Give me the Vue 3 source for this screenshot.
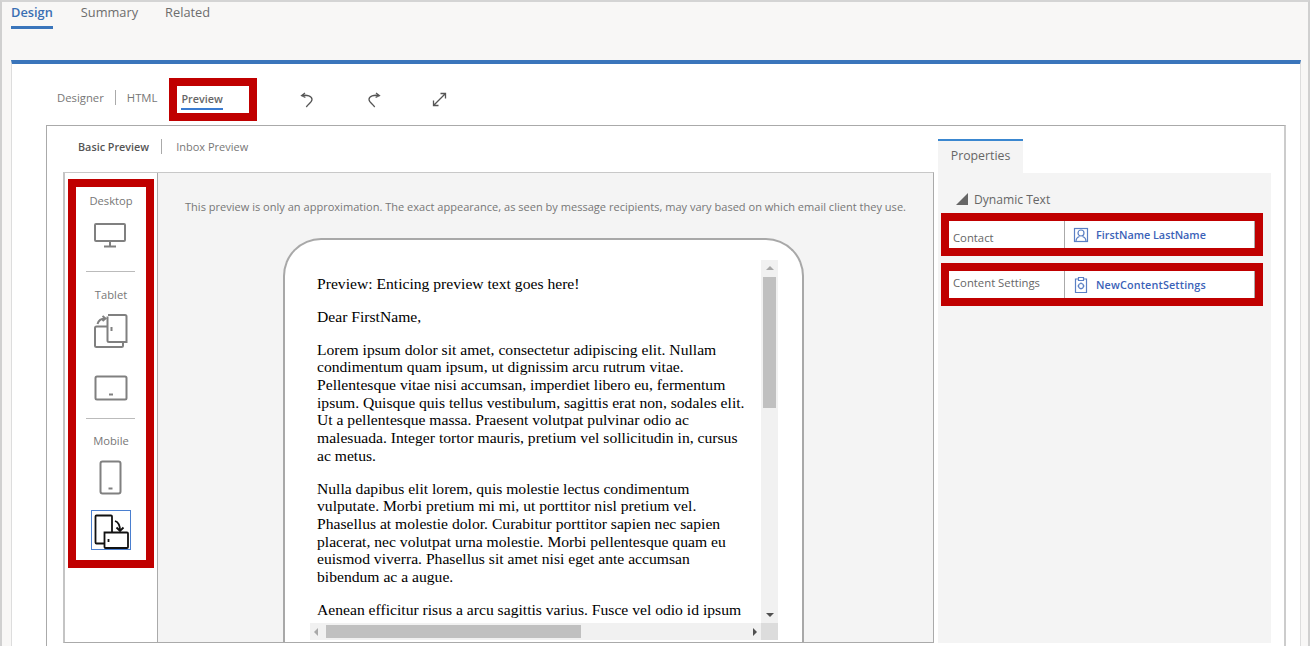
<script setup>
const tabs = ['Design', 'Summary', 'Related']

const paragraphs = [
  'Preview: Enticing preview text goes here!',
  'Dear FirstName,',
  'Lorem ipsum dolor sit amet, consectetur adipiscing elit. Nullam condimentum quam ipsum, ut dignissim arcu rutrum vitae. Pellentesque vitae nisi accumsan, imperdiet libero eu, fermentum ipsum. Quisque quis tellus vestibulum, sagittis erat non, sodales elit. Ut a pellentesque massa. Praesent volutpat pulvinar odio ac malesuada. Integer tortor mauris, pretium vel sollicitudin in, cursus ac metus.',
  'Nulla dapibus elit lorem, quis molestie lectus condimentum vulputate. Morbi pretium mi mi, ut porttitor nisl pretium vel. Phasellus at molestie dolor. Curabitur porttitor sapien nec sapien placerat, nec volutpat urna molestie. Morbi pellentesque quam eu euismod viverra. Phasellus sit amet nisi eget ante accumsan bibendum ac a augue.',
  'Aenean efficitur risus a arcu sagittis varius. Fusce vel odio id ipsum dignissim lobortis nunc at bibendum. Fusce tincidunt lorem ac nibh.'
]
</script>

<template>
  <div class="page">
    <nav class="top-tabs">
      <a v-for="(tab, i) in tabs" :key="tab" class="top-tab" :class="{ active: i === 0 }">{{ tab }}</a>
    </nav>

    <main class="panel">
      <div class="toolbar">
        <span class="mode">Designer</span>
        <span class="mode sep">HTML</span>
        <div class="mode-mark"><span class="mode current">Preview</span></div>
        <svg class="tool undo" width="14" height="16" viewBox="0 0 14 16">
          <path d="M5 1 1.6 3.6 5.4 5.4M1.8 3.6C7 2.6 12 4 12 7.400 12 10 8.500 12 6.300 15" />
        </svg>
        <svg class="tool redo" width="14" height="16" viewBox="0 0 14 16">
          <path d="M9 1 12.400 3.600 8.600 5.400M12.200 3.600C7 2.600 2 4 2 7.400 2 10 5.500 12 7.700 15" />
        </svg>
        <svg class="tool expand" width="15" height="15" viewBox="0 0 15 15">
          <path d="M1.500 13.500 13.500 1.500M8.500 1.500H13.500V6.500M1.500 8.500V13.500H6.500" />
        </svg>
      </div>

      <section class="editor">
        <div class="preview-side">
          <div class="sub-tabs">
            <span class="sub-tab strong">Basic Preview</span>
            <span class="sub-tab">Inbox Preview</span>
          </div>

          <div class="work">
            <aside class="devices">
              <div class="device-mark">
                <span class="device-label first">Desktop</span>
                <svg class="device gap-desktop" width="34" height="26" viewBox="0 0 34 26">
                  <rect x="2" y="2" width="30" height="17" rx="1" />
                  <path d="M17 19V24M11 24.500H23" />
                </svg>
                <hr class="rule rule-a">
                <span class="device-label">Tablet</span>
                <svg class="device gap-tablet" width="36" height="36" viewBox="0 0 36 36">
                  <path d="M15 2H32A1.500 1.500 0 0 1 33.500 3.500V29H16A1.500 1.500 0 0 1 14.500 27.500V3.500M30 29V32.500A1.500 1.500 0 0 1 28.500 34H3.500A1.500 1.500 0 0 1 2 32.500V15A1.500 1.500 0 0 1 3.500 13.500H14" />
                  <path d="M4.500 11C5.500 7.500 8 5.500 12 5.500M9.500 3 12.500 5.500 9.500 8M18.500 14V18" />
                </svg>
                <svg class="device gap-land" width="34" height="26" viewBox="0 0 34 26">
                  <rect x="1.500" y="1.500" width="31" height="23" rx="1.500" />
                  <path class="thick" d="M15 19.500H19" />
                </svg>
                <hr class="rule rule-b">
                <span class="device-label mobile">Mobile</span>
                <svg class="device gap-phone" width="23" height="35" viewBox="0 0 23 35">
                  <rect x="1.500" y="1.500" width="20" height="32" rx="2" />
                  <path class="thick" d="M9.500 28.500H13.500" />
                </svg>
                <button class="device-current">
                  <svg class="device dark" width="36" height="36" viewBox="0 0 36 36">
                    <path d="M11.500 30.500H3.500A1 1 0 0 1 2.500 29.500V3.500A1 1 0 0 1 3.500 2.500H18A1 1 0 0 1 19 3.500V19" />
                    <path d="M11.500 19.500H34A1 1 0 0 1 35 20.500V34A1 1 0 0 1 34 35H12.500A1 1 0 0 1 11.500 34Z" />
                    <path d="M22 8C25 9 27 12 27 17.500M30.500 14.500 27 18 23.500 14.500M15.500 26V29" />
                  </svg>
                </button>
              </div>
            </aside>

            <div class="stage">
              <p class="notice">This preview is only an approximation. The exact appearance, as seen by message recipients, may vary based on which email client they use.</p>
              <div class="phone">
                <div class="mail">
                  <div class="mail-body">
                    <p v-for="(text, i) in paragraphs" :key="i">{{ text }}</p>
                  </div>
                  <div class="vbar">
                    <i class="arrow up"></i>
                    <b class="vthumb"></b>
                    <i class="arrow down"></i>
                  </div>
                  <div class="hbar">
                    <i class="arrow left"></i>
                    <b class="hthumb"></b>
                    <i class="arrow right"></i>
                  </div>
                  <div class="corner"></div>
                </div>
              </div>
            </div>
          </div>
        </div>

        <aside class="properties">
          <div class="prop-tab">Properties</div>
          <div class="prop-body">
            <div class="prop-heading"><i class="tri"></i>Dynamic Text</div>
            <div class="prop-mark">
              <div class="prop-row">
                <span class="prop-name contact">Contact</span>
                <span class="prop-value">
                  <svg width="16" height="16" viewBox="0 0 16 16">
                    <rect x="1.500" y="1.500" width="13" height="13" />
                    <circle cx="8" cy="6" r="3" />
                    <path d="M3 14.500C3 11.500 5 10 6.500 9.500M13 14.500C13 11.500 11 10 9.500 9.500" />
                  </svg>
                  FirstName LastName
                </span>
              </div>
            </div>
            <div class="prop-mark">
              <div class="prop-row">
                <span class="prop-name">Content Settings</span>
                <span class="prop-value settings">
                  <svg width="16" height="18" viewBox="0 0 16 18">
                    <path d="M5.500 3H2.500V16.500H13.500V3H10.500M5.500 1.500H10.500V4.500H5.500Z" />
                    <circle cx="8" cy="10" r="2.500" />
                    <path d="M8 6.500V7.500M8 12.500V13.500M4.500 10H5.500M10.500 10H11.500" />
                  </svg>
                  NewContentSettings
                </span>
              </div>
            </div>
          </div>
        </aside>
      </section>
    </main>
  </div>
</template>

<style scoped>
.page {
  box-sizing: border-box;
  width: 1310px;
  height: 646px;
  overflow: hidden;
  display: flex;
  flex-direction: column;
  background: #f8f7f6;
  border-top: 2px solid #d4d4d4;
  border-left: 2px solid #d0d0d0;
  border-right: 2px solid #d0d0d0;
  font-family: "Open Sans", "Noto Sans", sans-serif;
  color: #666;
}

.top-tabs {
  height: 58px;
  display: flex;
  gap: 27px;
  padding-left: 9px;
  flex: none;
  box-sizing: border-box;
}

.top-tab {
  height: 27px;
  box-sizing: border-box;
  padding-top: 1px;
  font-size: 12.800px;
  line-height: 18px;
  color: #6d6d6d;
}

.top-tab.active {
  margin-right: 1px;
  color: #3a6fb3;
  font-weight: 600;
  border-bottom: 3px solid #3a75bb;
}

.panel {
  flex: 1;
  min-height: 0;
  margin: 0 7px 0 9px;
  background: #fff;
  border-top: 4px solid #3a75bb;
  border-left: 1px solid #ddd;
  border-right: 1px solid #ddd;
}

.toolbar {
  box-sizing: border-box;
  height: 61px;
  display: flex;
  align-items: center;
  padding: 10px 0 0 45px;
}

.mode {
  margin-bottom: 4px;
  font-size: 11.300px;
  color: #777;
}

.mode.sep {
  margin-left: 11px;
  padding-left: 11px;
  border-left: 1px solid #aaa;
}

.mode-mark {
  box-sizing: border-box;
  width: 88px;
  height: 43px;
  margin-left: 12px;
  padding: 5px 0 0 4px;
  border: 8px solid #c00000;
  display: flex;
  align-items: flex-start;
}

.mode.current {
  margin-bottom: 0;
  font-weight: 600;
  color: #666;
  padding-bottom: 2px;
  border-bottom: 2px solid #3a7bd0;
  line-height: 15px;
  font-size: 10.800px;
}

.tool {
  flex: none;
  fill: none;
  stroke: #555;
  stroke-width: 1.300;
}

.undo {
  margin-left: 43px;
}

.redo {
  margin-left: 53px;
}

.expand {
  margin-left: 51px;
}

.editor {
  box-sizing: border-box;
  height: 541px;
  margin: 0 14px 0 34px;
  display: flex;
  border: 1px solid #aaa;
  border-right: 2px solid #ccc;
  border-bottom: none;
}

.preview-side {
  width: 887px;
  flex: none;
  padding-left: 16px;
  box-sizing: border-box;
}

.sub-tabs {
  box-sizing: border-box;
  height: 46px;
  display: flex;
  align-items: center;
  padding: 0 0 6px 15px;
}

.sub-tab {
  font-size: 11px;
  color: #777;
}

.sub-tab.strong {
  font-size: 10.800px;
  font-weight: 600;
  color: #555;
  padding-right: 12px;
  margin-right: 14px;
  border-right: 1px solid #aaa;
}

.work {
  box-sizing: border-box;
  width: 871px;
  height: 471px;
  display: flex;
  border: 1px solid #aaa;
  border-top-color: #c8c8c8;
  border-left: 2px solid #c4c4c4;
}

.devices {
  width: 93px;
  flex: none;
  box-sizing: border-box;
  padding: 6px 0 0 2px;
  border-right: 1px solid #aaa;
}

.device-mark {
  box-sizing: border-box;
  width: 86px;
  height: 389px;
  margin-left: 1px;
  border: 8px solid #c00000;
  display: flex;
  flex-direction: column;
  align-items: center;
  background: #fff;
}

.device-label {
  font-size: 11.200px;
  line-height: 16px;
  color: #777;
  margin-top: 15px;
}

.device-label.first {
  margin-top: 6px;
}

.device-label.mobile {
  margin-top: 14px;
}

.device {
  flex: none;
  display: block;
  fill: none;
  stroke: #808080;
  stroke-width: 2;
}

.device .thick {
  stroke-width: 2;
}

.device.dark {
  stroke: #111;
  stroke-width: 1.800;
}

.gap-desktop {
  margin: 13px 2px 0 0;
}

.gap-tablet {
  margin-top: 10px;
}

.gap-land {
  margin-top: 26px;
}

.gap-phone {
  margin: 11px 2px 0 0;
}

.rule {
  width: 49px;
  margin: 0 2px 0 0;
  border: none;
  border-top: 1px solid #bbb;
}

.rule-a {
  margin-top: 23px;
}

.rule-b {
  margin-top: 17px;
}

.device-current {
  box-sizing: border-box;
  width: 40px;
  height: 40px;
  margin-top: 15px;
  padding: 2px 0 0 1px;
  border: 1px solid #4a7fd0;
  background: #fff;
}

.stage {
  flex: 1;
  min-width: 0;
  overflow: hidden;
  background: #f4f4f4;
  padding-left: 27px;
}

.notice {
  margin: 26px 0 0;
  font-size: 11.050px;
  line-height: 15px;
  color: #777;
  white-space: nowrap;
}

.phone {
  box-sizing: border-box;
  width: 521px;
  height: 480px;
  margin: 24px 0 0 98px;
  padding: 20px 0 0 0;
  background: #fff;
  border: 2px solid #a8a8a8;
  border-radius: 38px 38px 0 0;
  border-bottom: none;
}

.mail {
  position: relative;
  width: 493px;
  height: 380px;
  overflow: hidden;
}

.mail-body {
  box-sizing: border-box;
  width: 493px;
  padding: 15px 30px 0 32px;
  margin: 0;
  font-family: "Liberation Serif", "Times New Roman", serif;
  font-size: 15.630px;
  line-height: 17.670px;
  color: #000;
}

.mail-body p {
  margin: 0 0 15.200px;
}

.vbar {
  position: absolute;
  right: 0;
  top: 0;
  width: 17px;
  height: 363px;
  background: #f1f1f1;
}

.vthumb {
  position: absolute;
  left: 2px;
  top: 17px;
  width: 13px;
  height: 131px;
  background: #c0c0c0;
}

.hbar {
  position: absolute;
  left: 25px;
  bottom: 0;
  width: 451px;
  height: 17px;
  background: #f1f1f1;
}

.hthumb {
  position: absolute;
  left: 16px;
  top: 2px;
  width: 255px;
  height: 13px;
  background: #c0c0c0;
}

.corner {
  position: absolute;
  right: 0;
  bottom: 0;
  width: 17px;
  height: 17px;
  background: #dcdcdc;
}

.arrow {
  position: absolute;
  width: 0;
  height: 0;
  border: 4px solid transparent;
}

.arrow.up {
  left: 5px;
  top: 2px;
  border-bottom-color: #a8a8a8;
}

.arrow.down {
  left: 5px;
  bottom: 2px;
  border-top-color: #505050;
}

.arrow.left {
  left: 0;
  top: 5px;
  border-right-color: #a8a8a8;
}

.arrow.right {
  right: 0;
  top: 5px;
  border-left-color: #505050;
}

.properties {
  flex: none;
  width: 333px;
  margin-left: 4px;
  padding-top: 13px;
  display: flex;
  flex-direction: column;
}

.prop-tab {
  box-sizing: border-box;
  width: 85px;
  height: 34px;
  border-top: 2px solid #3a87d0;
  background: #f4f4f4;
  font-size: 12.300px;
  line-height: 30px;
  text-align: center;
  color: #666;
}

.prop-body {
  flex: 0 0 470px;
  background: #f4f4f4;
  padding: 17px 8px 0 3px;
  box-sizing: border-box;
}

.prop-heading {
  display: flex;
  align-items: center;
  height: 18px;
  padding-left: 15px;
  font-size: 12.100px;
  color: #666;
}

.tri {
  width: 0;
  height: 0;
  margin-right: 6px;
  border-style: solid;
  border-width: 0 0 12px 12px;
  border-color: transparent transparent #666 transparent;
}

.prop-mark {
  box-sizing: border-box;
  width: 322px;
  height: 43px;
  margin-top: 7px;
  border: 8px solid #c00000;
}

.prop-heading + .prop-mark {
  margin-top: 5px;
}

.prop-row {
  height: 100%;
  display: flex;
  background: #fff;
  border-right: 1px solid #aaa;
}

.prop-name {
  box-sizing: border-box;
  width: 116px;
  padding: 0 0 10px 4px;
  border-right: 1px solid #aaa;
  font-size: 11.300px;
  line-height: 24px;
  color: #666;
  white-space: nowrap;
}

.prop-name.contact {
  padding: 5px 0 0 4px;
}

.prop-value {
  display: flex;
  align-items: center;
  gap: 7px;
  padding-left: 8px;
  font-size: 10.800px;
  font-weight: 600;
  color: #3b62b8;
  white-space: nowrap;
}

.prop-value.settings {
  letter-spacing: 0.150px;
}

.prop-value svg {
  flex: none;
  fill: none;
  stroke: #5a7fc4;
  stroke-width: 1.200;
}
</style>

<style>
html,
body {
  margin: 0;
  overflow: hidden;
  background: #fff;
}
</style>
